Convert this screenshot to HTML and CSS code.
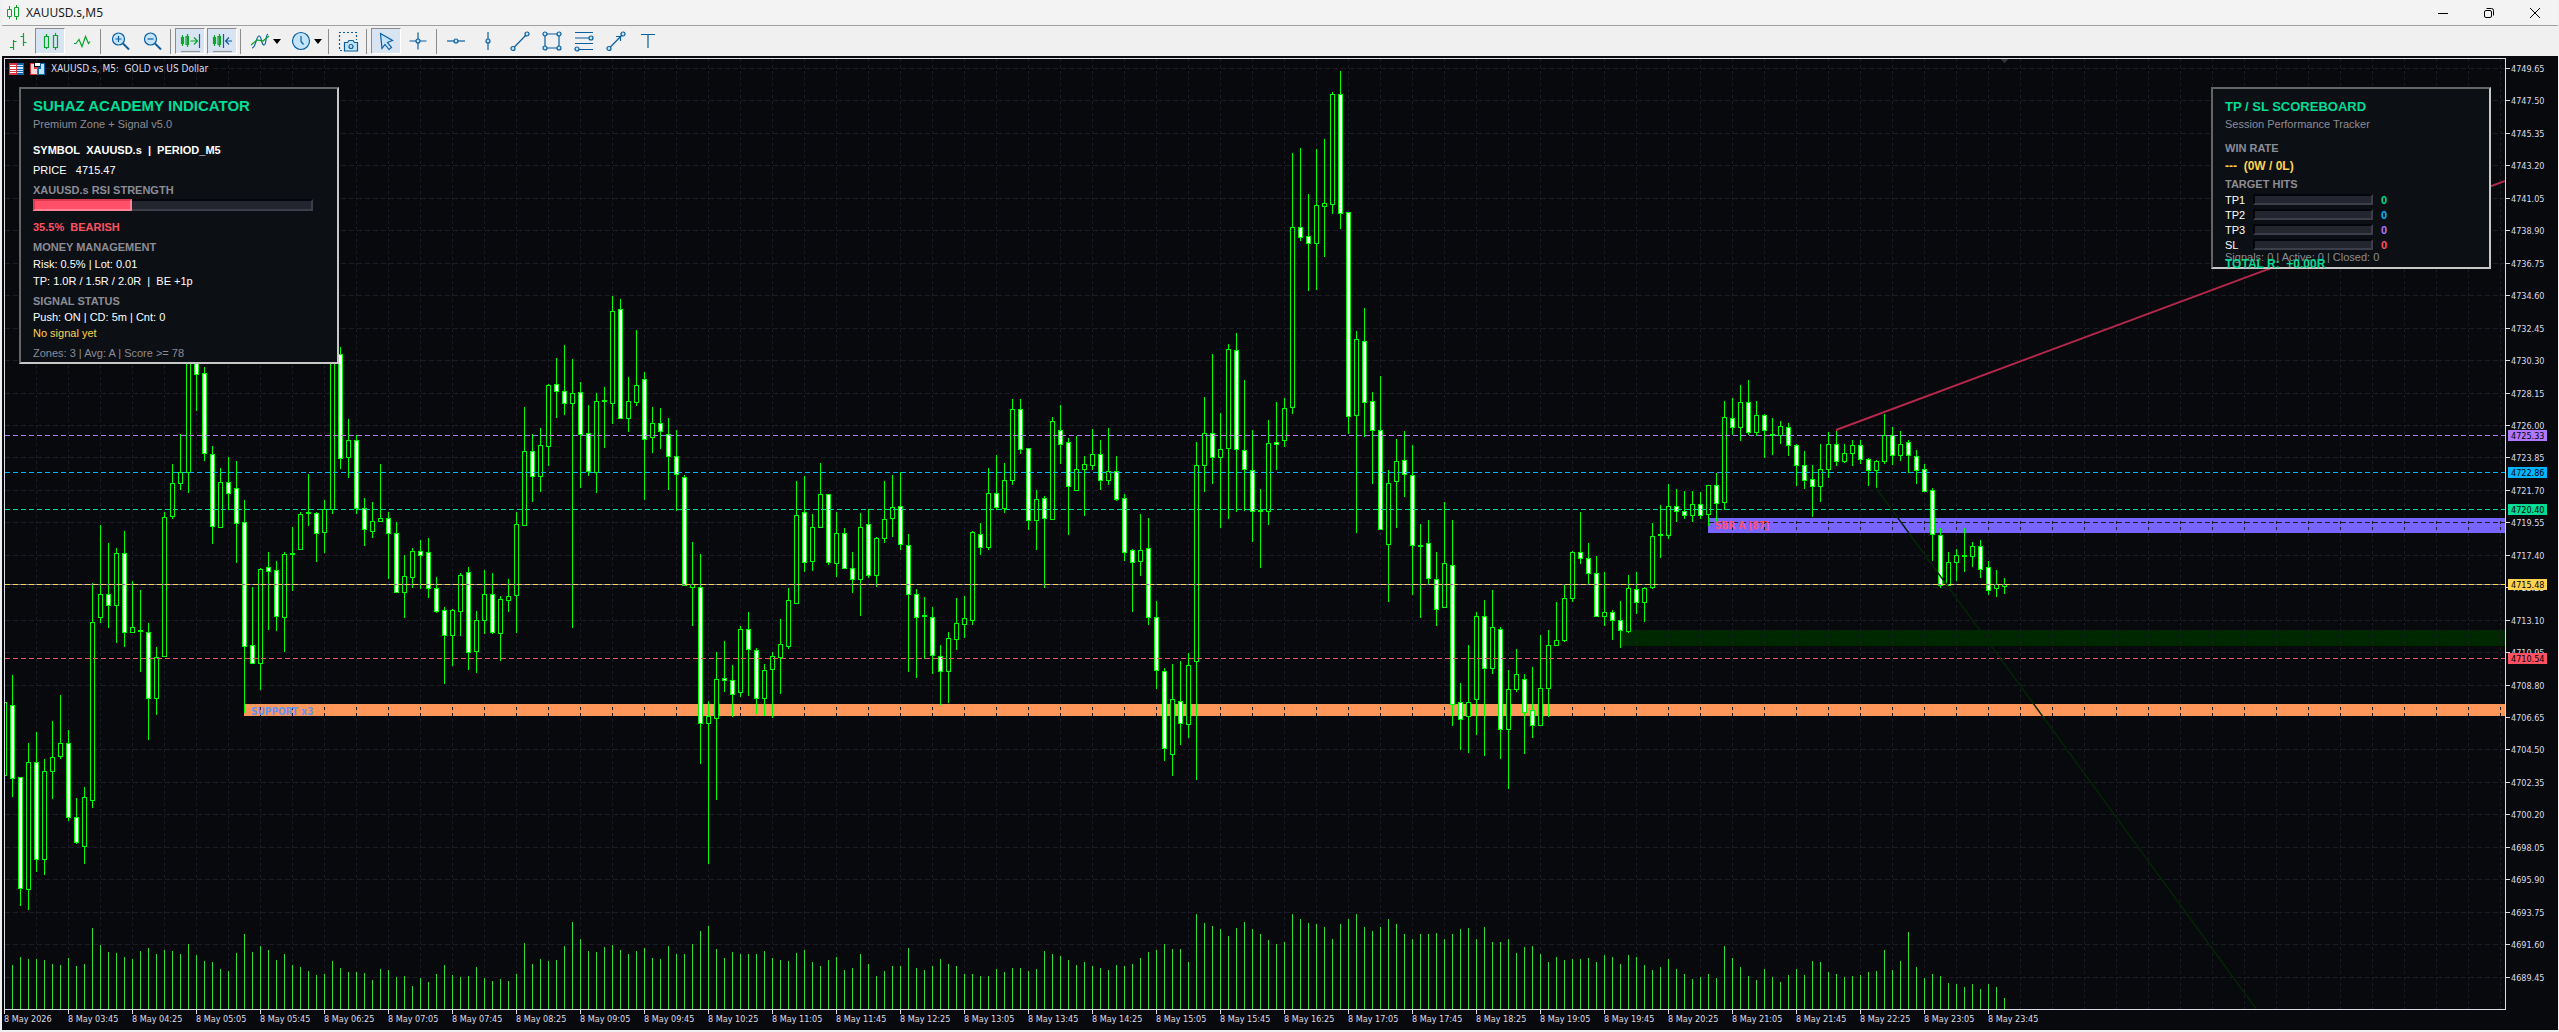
FILE: index.html
```html
<!DOCTYPE html>
<html lang="en">
<head>
  <meta charset="UTF-8">
  <meta name="viewport" content="width=device-width, initial-scale=1">
  <title>XAUUSD.s,M5</title>
  <link rel="stylesheet" href="styles.css">
</head>
<body>

  <header class="titlebar">
    <svg class="app-icon" width="14" height="16" viewBox="0 0 14 16"><path d="M3.5 1v3M3.5 12v2M1.5 4.5h4v7h-4zM10.5 0v2M10.5 12v3M8.5 2.5h4v9h-4z"/></svg>
    <h1>XAUUSD.s,M5</h1>
    <div class="window-buttons">
      <button type="button" aria-label="Minimize"><svg width="12" height="12" viewBox="0 0 12 12"><path d="M1 6.5h10"/></svg></button>
      <button type="button" aria-label="Restore"><svg width="12" height="12" viewBox="0 0 12 12"><rect x="1.500" y="3.500" width="7" height="7" rx="1.500"/><path d="M3.500 1.500h5a2 2 0 0 1 2 2v5"/></svg></button>
      <button type="button" aria-label="Close"><svg width="12" height="12" viewBox="0 0 12 12"><path d="M1 1l10 10M11 1L1 11"/></svg></button>
    </div>
  </header>

  <nav class="toolbar">
    <button type="button" class="tool green" aria-label="Bar chart"><svg viewBox="0 0 24 24"><path d="M7.500 11v10M4 18.500h3.500M7.500 12.500h3M17.500 4v13M14.500 7.500h3M17.500 13.500h3"/></svg></button>
    <button type="button" class="tool green active" aria-label="Candlesticks"><svg viewBox="0 0 24 24"><path d="M8.500 5v2.500M8.500 18.500V20M6.500 7.500h4v11h-4zM17.500 4v2.500M17.500 18.500V21M15.500 6.500h4v12h-4z"/></svg></button>
    <button type="button" class="tool green" aria-label="Line chart"><svg viewBox="0 0 24 24"><path d="M4 14.500h2l3-4 3 7 3.500-10 3 7 1.500-2"/></svg></button>
    <span class="sep"></span>
    <button type="button" class="tool" aria-label="Zoom in"><svg viewBox="0 0 24 24"><circle class="soft" cx="10.500" cy="10" r="6"/><path d="M7.500 10h6M10.500 7v6"/><path class="thick" d="M15 14.500l6 6"/></svg></button>
    <button type="button" class="tool" aria-label="Zoom out"><svg viewBox="0 0 24 24"><circle class="soft" cx="10.500" cy="10" r="6"/><path d="M7.500 10h6"/><path class="thick" d="M15 14.500l6 6"/></svg></button>
    <span class="sep"></span>
    <button type="button" class="tool active" aria-label="Auto scroll"><svg viewBox="0 0 24 24"><g class="green-line"><path d="M4.500 6v11M3.500 8.500h2v6h-2zM9.500 5v13M8 7.500h2.500v8H8zM12.500 12h7M16 8.500l3.500 3.500-3.500 3.500"/></g><path d="M21.500 5v14"/><path class="shade" d="M3 22.500h19"/></svg></button>
    <button type="button" class="tool active" aria-label="Chart shift"><svg viewBox="0 0 24 24"><g class="green-line"><path d="M4.500 6v11M3.500 8.500h2v6h-2zM9.500 5v13M8 7.500h2.500v8H8z"/></g><path d="M13.500 5v14M22 12h-6M19 8.500L15.500 12l3.500 3.500"/><path class="shade" d="M3 22.500h19"/></svg></button>
    <span class="sep"></span>
    <button type="button" class="tool wide" aria-label="Indicators"><svg viewBox="0 0 24 24"><path d="M4 19c4 0 4-12 7-12s2 9 5 9 1-10 4-11"/><path class="green-line" d="M3 16l6-5 6 1 6-5"/></svg><span class="caret"></span></button>
    <button type="button" class="tool wide" aria-label="Timeframes"><svg viewBox="0 0 24 24"><circle class="soft" cx="12" cy="12" r="8.500"/><path d="M12 7v5.500l2.500 3"/></svg><span class="caret"></span></button>
    <span class="sep"></span>
    <button type="button" class="tool" aria-label="Screenshot"><svg viewBox="0 0 24 24"><path stroke-dasharray="2 2" d="M6 21.500H3.500v-18h17V11"/><path class="soft" d="M8.500 13.500h3l1.500-2h4l1.500 2h3v8.500h-13z"/><circle cx="15" cy="17.500" r="2"/></svg></button>
    <span class="sep"></span>
    <button type="button" class="tool active" aria-label="Cursor"><svg viewBox="0 0 24 24"><path class="soft" d="M6.500 4.500l12 7-5 2 4 5-2.500 2-4-5-3 4z"/></svg></button>
    <button type="button" class="tool" aria-label="Crosshair"><svg viewBox="0 0 24 24"><path d="M12 3.500v17M3.500 12h17"/><circle class="soft" cx="12" cy="12" r="2"/></svg></button>
    <span class="sep"></span>
    <button type="button" class="tool" aria-label="Horizontal line"><svg viewBox="0 0 24 24"><path d="M3 12h18"/><circle class="soft" cx="12" cy="12" r="2"/></svg></button>
    <button type="button" class="tool" aria-label="Vertical line"><svg viewBox="0 0 24 24"><path d="M12 3v18"/><circle class="soft" cx="12" cy="12" r="2"/></svg></button>
    <button type="button" class="tool" aria-label="Trendline"><svg viewBox="0 0 24 24"><path d="M5 19.500L19 5"/><circle class="soft" cx="5" cy="19.500" r="2"/><circle class="soft" cx="19" cy="5" r="2"/></svg></button>
    <button type="button" class="tool" aria-label="Rectangle"><svg viewBox="0 0 24 24"><path d="M5 5h14v14H5z"/><circle class="soft" cx="5" cy="5" r="2"/><circle class="soft" cx="19" cy="5" r="2"/><circle class="soft" cx="5" cy="19" r="2"/><circle class="soft" cx="19" cy="19" r="2"/></svg></button>
    <button type="button" class="tool" aria-label="Fibonacci"><svg viewBox="0 0 24 24"><path d="M3 3.500h18M3 9h18M3 14.500h18M3 20.500h18"/><circle class="soft" cx="19" cy="9" r="2"/><circle class="soft" cx="5" cy="20" r="2"/></svg></button>
    <button type="button" class="tool" aria-label="Arrow"><svg viewBox="0 0 24 24"><path d="M5 19.500L19 5M12 7.500h4.500V12"/><circle class="soft" cx="5" cy="19.500" r="2"/><circle class="soft" cx="19" cy="5" r="2"/></svg></button>
    <button type="button" class="tool" aria-label="Text"><svg viewBox="0 0 24 24"><path d="M5 5.500h14M12 5.500V19"/></svg></button>
  </nav>

  <main class="chart">
    <section class="plot">
      <svg id="plot" class="canvas"></svg>

      <div class="caption">
        <svg width="15" height="12" viewBox="0 0 15 12"><path fill="#d9363e" d="M0 0h8v12H0z"/><path fill="#fff" d="M1 2h6v1H1zM1 4h6v2H1zM1 7h6v1H1zM1 9h6v1H1z"/><path fill="#0a64a8" d="M8 0h7v12H8z"/><path fill="#cfe8ff" d="M8 2h6v1H8zM8 4h6v2H8zM8 7h6v1H8zM8 9h6v1H8z"/></svg>
        <svg width="15" height="12" viewBox="0 0 15 12"><path fill="#d9363e" d="M0 0h4v4h4v8H0z"/><path fill="#ffd9d9" d="M1 1h3v5h3v5H1z"/><path fill="#0a64a8" d="M15 0h-5v4H8v8h7z"/><path fill="#bfe3ff" d="M14 1h-3v5H9v5h5z"/><path fill="#fff" d="M5 0h5v3H5z"/></svg>
        <span>XAUUSD.s, M5:&nbsp; GOLD vs US Dollar</span>
      </div>

      <aside class="panel indicator">
        <h2>SUHAZ ACADEMY INDICATOR</h2>
        <p class="muted">Premium Zone + Signal v5.0</p>
        <p class="strong gap-xl">SYMBOL&nbsp; XAUUSD.s&nbsp; |&nbsp; PERIOD_M5</p>
        <p class="gap-m">PRICE&nbsp;&nbsp; 4715.47</p>
        <p class="label gap-m">XAUUSD.s RSI STRENGTH</p>
        <div class="meter rsi"><div class="meter-fill" style="width: 35.5%"></div></div>
        <p class="strong bear gap-l">35.5%&nbsp; BEARISH</p>
        <p class="label gap-m">MONEY MANAGEMENT</p>
        <p class="gap-s">Risk: 0.5% | Lot: 0.01</p>
        <p class="gap-s">TP: 1.0R / 1.5R / 2.0R&nbsp; |&nbsp; BE +1p</p>
        <p class="label gap-m">SIGNAL STATUS</p>
        <p>Push: ON | CD: 5m | Cnt: 0</p>
        <p class="gold">No signal yet</p>
        <p class="muted gap-m">Zones: 3 | Avg: A | Score &gt;= 78</p>
      </aside>

      <aside class="panel scoreboard">
        <h2>TP / SL SCOREBOARD</h2>
        <p class="muted">Session Performance Tracker</p>
        <p class="label gap-l">WIN RATE</p>
        <p class="rate gold">---&nbsp; (0W / 0L)</p>
        <p class="label gap-s">TARGET HITS</p>
        <div class="hit"><span>TP1</span><div class="meter"></div><b class="green-text">0</b></div>
        <div class="hit"><span>TP2</span><div class="meter"></div><b class="blue-text">0</b></div>
        <div class="hit"><span>TP3</span><div class="meter"></div><b class="violet-text">0</b></div>
        <div class="hit"><span>SL</span><div class="meter"></div><b class="bear">0</b></div>
        <p class="totals muted">Signals: 0 | Active: 0 | Closed: 0</p>
        <p class="total-r">TOTAL R:&nbsp; +0.00R</p>
      </aside>
    </section>

    <svg id="prices" class="prices"></svg>
    <div id="times" class="times"></div>
  </main>

  <script src="chart.js"></script>
</body>
</html>
```

FILE: styles.css
```css
* {
  box-sizing: border-box;
}

body {
  margin: 0;
  height: 100vh;
  display: flex;
  flex-direction: column;
  padding: 0 1px 2px 2px;
  background: #f0f0f0;
  color: #fff;
  font-family: "Liberation Sans", Arial, sans-serif;
  font-size: 11px;
  overflow: hidden;
}

h1, h2, p {
  margin: 0;
}

button {
  padding: 0;
  border: none;
  background: none;
}

/* title bar */
.titlebar {
  display: flex;
  align-items: center;
  height: 26px;
  padding-left: 4px;
  background: #f3f3f3;
  border-bottom: 1px solid #a0a0a0;
}

.app-icon {
  fill: none;
  stroke: #0aa52a;
}

.titlebar h1 {
  margin-left: 6px;
  font: 12px "Noto Sans", "Open Sans", sans-serif;
  color: #1a1a1a;
}

.window-buttons {
  display: flex;
  margin-left: auto;
}

.window-buttons button {
  display: flex;
  align-items: center;
  justify-content: center;
  width: 46px;
  height: 24px;
}

.window-buttons svg {
  fill: none;
  stroke: #000;
}

/* toolbar */
.toolbar {
  display: flex;
  align-items: center;
  gap: 2px;
  height: 30px;
  padding-left: 1px;
}

.tool {
  display: flex;
  align-items: center;
  justify-content: center;
  width: 30px;
  height: 26px;
  border: 1px solid transparent;
}

.tool.active {
  background: #d8e4f2;
  border-color: #8c8c8c #fff #fff #8c8c8c;
}

.tool.wide {
  width: 39px;
}

.tool svg {
  width: 24px;
  height: 24px;
  flex: none;
  fill: none;
  stroke: #0a5fa0;
  stroke-width: 1.2;
}

.tool.green svg,
.tool svg .green-line {
  stroke: #0aa52a;
}

.tool .soft {
  fill: #c4e4fb;
}

.tool .thick {
  stroke-width: 2;
}

.tool .shade {
  stroke: #969696;
}

.caret {
  border: 4px solid transparent;
  border-top: 5px solid #000;
  border-bottom: none;
  margin-left: 1px;
}

.sep {
  width: 1px;
  height: 25px;
  margin: 0 2px 0 1px;
  background: #8c8c8c;
}

/* chart */
.chart {
  flex: 1;
  min-height: 0;
  display: grid;
  grid-template-columns: 1fr 52px;
  grid-template-rows: 1fr 20px;
  padding: 2px 0 0 2px;
  background: #08090d;
}

.plot {
  position: relative;
  min-height: 0;
  border: 1px solid #dcdce6;
}

.canvas,
.prices {
  display: block;
  width: 100%;
  height: 100%;
  min-height: 0;
  shape-rendering: crispEdges;
}

.canvas {
  position: absolute;
  inset: 0;
}

.canvas .grid {
  stroke: #1b1c26;
  fill: none;
}

.canvas .trend {
  shape-rendering: auto;
  fill: none;
}

.zone-label {
  font: bold 10px "DejaVu Sans Condensed", "DejaVu Sans", Verdana, sans-serif;
}

.prices {
  overflow: visible;
}

.prices text,
.times,
.caption {
  font-family: "DejaVu Sans Condensed", "DejaVu Sans", Tahoma, sans-serif;
  font-size: 9px;
}

.prices text {
  fill: #dcdce6;
}

.prices .tag-text {
  fill: #000;
}

.times {
  display: flex;
  color: #dcdce6;
  overflow: hidden;
}

.times span {
  position: relative;
  flex: none;
  width: 64px;
  padding-top: 4px;
  line-height: 11px;
  white-space: nowrap;
}

.times span::before {
  content: "";
  position: absolute;
  left: 0;
  top: 0;
  width: 1px;
  height: 4px;
  background: #dcdce6;
}

.caption {
  position: absolute;
  top: 4px;
  left: 4px;
  display: flex;
  align-items: center;
  gap: 6px;
  font-size: 10px;
  line-height: 12px;
  color: #dcdce6;
}

/* info panels */
.panel {
  position: absolute;
  top: 28px;
  padding: 0 12px;
  background: #0c1014;
  border: 2px solid;
  border-color: #646464 #c8c8c8 #c8c8c8 #646464;
  line-height: 16px;
  white-space: nowrap;
}

.indicator {
  left: 14px;
  width: 320px;
  padding-top: 7px;
  padding-bottom: 1px;
}

.scoreboard {
  right: 14px;
  width: 280px;
  height: 182px;
  padding-top: 9px;
}

.panel h2 {
  font-size: 15px;
  line-height: 20px;
  color: #00dc96;
}

.scoreboard h2 {
  font-size: 13px;
  line-height: 18px;
}

.muted {
  color: #8c8c96;
}

.label {
  font-weight: bold;
  color: #8c8c96;
}

.strong {
  font-weight: bold;
}

.bear {
  color: #ff5064;
}

.gold {
  color: #ffd250;
}

.green-text {
  color: #00dc96;
}

.blue-text {
  color: #00b4ff;
}

.violet-text {
  color: #b478ff;
}

.gap-s { margin-top: 1px; }
.gap-m { margin-top: 4px; }
.gap-l { margin-top: 8px; }
.gap-xl { margin-top: 10px; }

.meter {
  width: 120px;
  height: 11px;
  background: #23252f;
  border: 2px solid;
  border-color: #04050c #3c3e4a #3c3e4a #04050c;
}

.meter.rsi {
  width: 280px;
  height: 12px;
  margin-top: 1px;
  border-left: none;
  border-color: #04050c #3c3e4a #3c3e4a;
}

.meter-fill {
  height: 12px;
  margin-top: -2px;
  background: #ff5068;
  border: 2px solid;
  border-color: #dc3c50 #ff8296 #ff8296 #dc3c50;
}

.rate {
  margin-top: 1px;
  font-size: 12px;
  font-weight: bold;
  line-height: 18px;
}

.hit {
  display: flex;
  align-items: center;
  height: 15px;
}

.hit span {
  width: 28px;
}

.hit b {
  margin-left: 8px;
}

.totals {
  line-height: 11px;
}

.total-r {
  position: absolute;
  left: 12px;
  bottom: -5px;
  font-size: 12px;
  font-weight: bold;
  line-height: 16px;
  color: #00dc96;
}
```

FILE: chart.js
```js
// each bar: [up, high, body top, body bottom, low, volume top]
const bars = [
  [1,702,703,776,776,965],[0,676,706,779,797,967],[0,778,778,890,907,959],[1,744,763,891,911,961],
  [0,733,763,861,873,961],[1,760,772,861,876,962],[1,722,758,772,799,966],[1,696,744,757,759,967],
  [0,731,744,818,821,960],[0,799,818,844,845,968],[1,788,798,848,865,966],[1,584,623,801,808,930],
  [1,526,595,618,623,947],[0,544,595,606,628,954],[1,549,554,606,643,955],[0,532,554,633,647,959],
  [1,582,628,633,633,961],[1,591,631,632,672,953],[0,624,633,699,740,950],[1,648,658,699,715,956],
  [1,513,518,657,657,952],[1,465,484,517,519,953],[1,434,473,484,490,956],[1,345,350,473,493,946],
  [0,362,362,374,410,957],[0,367,373,454,461,963],[0,447,455,527,544,964],[1,469,483,528,528,971],
  [0,458,483,494,510,973],[0,462,489,524,563,955],[0,501,523,647,713,936],[0,588,646,664,664,954],
  [1,569,570,664,690,948],[0,553,568,572,630,952],[0,562,571,617,631,962],[1,553,555,618,652,956],
  [1,528,554,555,591,967],[1,513,515,550,550,969],[1,475,513,514,526,973],[0,513,514,534,562,977],
  [1,501,510,533,553,976],[1,335,340,510,514,963],[0,347,354,459,469,970],[1,419,440,458,478,974],
  [0,435,441,509,514,974],[0,499,509,530,546,975],[1,503,522,532,538,982],[1,465,519,522,522,971],
  [0,513,519,534,579,972],[0,523,534,593,593,979],[1,556,577,593,618,978],[1,549,552,578,588,988],
  [0,541,552,556,589,980],[0,539,553,589,598,984],[0,578,589,612,613,976],[0,608,611,636,684,967],
  [1,610,611,636,666,977],[1,574,576,612,636,979],[0,568,573,653,670,978],[1,612,621,652,673,969],
  [1,571,595,621,634,980],[0,574,595,633,634,983],[1,597,600,634,661,981],[1,580,597,601,612,983],
  [1,513,525,596,633,976],[1,407,452,526,526,945],[0,434,452,477,502,966],[1,428,446,477,492,961],
  [1,384,385,447,466,963],[0,358,384,391,417,962],[0,345,391,403,414,948],[1,359,393,403,628,924],
  [0,382,392,434,488,941],[0,405,433,472,476,953],[1,393,401,473,493,954],[1,387,400,401,448,949],
  [1,296,311,403,423,947],[0,299,309,418,418,952],[1,377,401,418,431,956],[1,330,385,402,405,953],
  [0,372,379,439,500,950],[1,407,423,437,453,960],[0,408,423,431,449,961],[0,418,434,457,490,948],
  [0,430,457,475,511,956],[0,476,478,586,586,956],[1,543,585,588,626,946],[0,555,588,724,764,933],
  [1,702,717,724,865,928],[1,653,680,719,800,951],[0,642,679,681,692,960],[0,666,681,695,717,954],
  [1,627,630,693,697,956],[0,613,630,650,696,956],[0,649,651,699,714,956],[1,665,671,699,716,953],
  [1,653,657,670,718,960],[1,620,645,658,694,962],[1,589,601,647,649,963],[1,482,516,604,604,955],
  [0,477,513,563,572,952],[1,515,528,562,571,964],[1,464,495,528,528,968],[0,495,495,563,565,962],
  [1,513,534,564,577,959],[0,529,534,569,569,972],[0,553,569,580,593,970],[1,514,528,580,616,956],
  [0,510,525,576,578,966],[1,538,539,576,587,978],[1,482,520,539,543,973],[1,476,508,519,537,968],
  [0,473,507,545,550,968],[0,535,546,595,672,950],[0,590,595,618,678,970],[1,598,616,617,659,972],
  [0,608,618,656,674,968],[0,646,657,672,705,961],[1,633,639,672,703,966],[1,599,624,640,650,968],
  [1,597,619,625,638,976],[1,532,533,621,625,976],[0,524,535,548,555,978],[1,469,494,548,550,978],
  [0,456,494,508,510,971],[1,464,481,509,513,974],[1,399,409,481,485,970],[0,399,409,450,454,970],
  [0,449,449,521,530,973],[1,491,500,521,550,971],[0,497,499,519,588,953],[1,417,421,520,520,956],
  [0,405,430,445,464,958],[0,438,443,487,535,962],[1,436,470,491,491,967],[1,457,465,470,516,964],
  [1,429,455,466,470,968],[0,440,455,481,490,970],[1,428,472,481,485,972],[0,457,472,500,501,967],
  [0,495,499,553,561,968],[0,550,551,563,612,966],[1,515,551,562,576,960],[0,519,549,618,625,954],
  [0,602,618,671,689,952],[0,669,672,749,761,946],[1,665,700,755,776,951],[0,662,702,724,745,951],
  [1,654,666,725,738,964],[1,443,466,662,780,916],[1,397,433,466,492,925],[0,354,433,458,484,928],
  [1,413,450,458,528,931],[1,344,349,449,519,938],[0,333,350,450,512,930],[0,380,451,470,511,924],
  [0,430,471,512,542,931],[1,490,511,512,568,936],[1,420,444,512,525,942],[0,402,443,445,470,946],
  [1,398,408,441,447,944],[1,153,227,407,413,916],[0,148,227,237,240,921],[0,194,236,243,290,925],
  [1,149,205,243,289,926],[1,139,203,206,256,929],[1,92,94,204,213,941],[0,71,94,213,228,926],
  [0,212,212,416,433,921],[1,331,339,415,533,916],[0,308,341,402,436,929],[0,392,401,430,484,933],
  [0,376,430,530,530,929],[1,471,484,545,602,921],[1,439,462,482,528,926],[0,431,461,475,497,936],
  [0,446,476,546,595,941],[1,525,546,547,618,936],[0,521,544,579,584,936],[0,553,580,610,626,935],
  [1,503,564,608,608,941],[0,521,566,705,726,936],[0,684,703,720,750,931],[1,646,703,717,753,930],
  [1,613,617,700,735,941],[0,601,617,669,756,929],[1,591,628,669,674,944],[0,628,630,730,759,944],
  [1,671,690,730,789,941],[1,650,675,690,692,955],[0,675,680,713,754,949],[0,668,711,726,738,948],
  [1,636,689,726,726,956],[1,631,646,689,717,964],[1,603,641,646,646,959],[1,585,599,641,642,962],
  [1,552,553,599,602,961],[0,513,553,559,564,961],[0,544,559,574,584,960],[0,557,574,617,617,964],
  [1,573,613,617,626,957],[0,611,613,621,640,959],[0,602,621,631,648,966],[1,576,589,632,633,957],
  [0,573,590,603,614,959],[1,588,589,603,622,967],[1,524,537,588,589,972],[1,506,535,536,558,969],
  [1,485,507,536,539,961],[0,490,507,512,522,971],[0,492,512,516,519,976],[1,492,505,516,522,981],
  [0,493,505,516,519,979],[1,486,486,515,526,976],[0,474,486,504,522,980],[1,401,417,503,510,948],
  [0,398,418,427,434,960],[1,385,402,427,440,969],[0,380,402,432,434,978],[1,401,415,432,435,982],
  [0,414,415,430,458,971],[1,418,434,435,455,979],[1,421,426,435,444,984],[0,423,427,446,456,977],
  [0,445,446,466,486,971],[0,452,466,481,489,977],[0,466,480,487,517,963],[1,445,470,487,502,964],
  [1,432,445,470,478,974],[0,431,445,462,466,976],[1,445,454,462,463,979],[1,440,446,454,466,978],
  [0,440,446,460,464,977],[0,459,460,471,486,974],[1,461,462,471,489,973],[1,414,435,462,464,952],
  [0,427,435,456,465,972],[1,431,445,456,461,963],[0,440,443,456,473,934],[0,451,457,471,484,969],
  [0,465,470,492,492,980],[0,489,491,535,561,976],[0,529,536,586,588,978],[1,553,563,586,586,985],
  [1,550,556,563,581,986],[1,529,556,557,572,989],[1,543,547,557,567,986],[0,541,547,570,578,991],
  [0,562,568,591,595,986],[1,571,585,589,597,989],[1,579,585,587,594,1000]
];

const levels = [
  { price: "4725.33", y: 435, color: "#b078ff" },
  { price: "4722.86", y: 472, color: "#00b4ff" },
  { price: "4720.40", y: 509, color: "#00dc96" },
  { price: "4710.54", y: 658, color: "#ff5064" },
  { price: "4715.48", y: 584, color: "#ffd250" }
];

const TOP = 59;
const STEP = 8;
const BASE = 950;
const priceY = k => Math.round(68 + k * 32.45);
const barY = v => Math.round(v * 0.9975 + 0.6) - TOP;
const rect = (x, y, w, h, fill) => `<rect x="${x}" y="${y}" width="${w}" height="${h}" fill="${fill}"/>`;

function drawPlot() {
  const svg = document.getElementById("plot");
  const width = svg.clientWidth;
  let out = "";

  // supply / demand zones
  out += rect(1703, 518 - TOP, width - 1703, 15, "#7864ff");
  out += rect(1617, 630 - TOP, width - 1617, 16, "#002800");
  out += rect(239, 704 - TOP, width - 239, 12, "#ff965a");

  let grid = "";
  for (let x = 31; x < width; x += 32) grid += `M${x}.5 0V${BASE}`;
  out += `<path class="grid" stroke-dasharray="3 3" d="${grid}"/>`;
  grid = "";
  for (let k = 0; k < 29; k++) {
    const y = priceY(k) - TOP;
    if (k !== 20) grid += `M0 ${y}.5H${width}`;
  }
  out += `<path class="grid" stroke-dasharray="5 3" d="${grid}"/>`;

  bars.forEach((b, i) => {
    const x = i * STEP - 1;
    const [up, high, top, bottom, low, vol] = b;
    const t = barY(top);
    const h = barY(bottom) - t + 1;
    out += rect(x, barY(vol), 1, BASE - barY(vol), "#32dc32");
    out += rect(x, barY(high), 1, barY(low) - barY(high) + 1, "#00ff00");
    out += rect(x - 2, t, 5, h, "#00ff00");
    if (h > 2) out += rect(x - 1, t + 1, 3, h - 2, up ? "#000" : "#fff");
  });

  levels.forEach(l => {
    const y = l.y - TOP + 0.5;
    if (l.price === "4715.48") out += `<path stroke="#787c8c" d="M0 ${y}H${width}"/>`;
    out += `<path stroke="${l.color}" stroke-dasharray="5 3" d="M0 ${y}H${width}"/>`;
  });

  // trend lines
  out += `<path class="trend" stroke="#b4284b" stroke-width="2" d="M1831 371L2500 122"/>`;
  out += `<path class="trend" stroke="#032503" stroke-width="1.5" d="M1871 429L2252 951"/>`;

  out += `<text class="zone-label" x="246" y="656" fill="#6495ed">SUPPORT x3</text>`;
  out += `<text class="zone-label" x="1710" y="470" fill="#ff5078">SBR A [87]</text>`;
  out += `<path fill="#32343e" d="M1996 0h7l-3.500 4z"/>`;
  svg.innerHTML = out;
}

function drawPrices() {
  let out = "";
  for (let k = 0; k < 29; k++) {
    const y = priceY(k) - TOP + 1;
    out += rect(0, y, 4, 1, "#dcdce6");
    out += `<text x="5" y="${y + 4}">${(4749.65 - k * 2.15).toFixed(2)}</text>`;
  }
  levels.forEach(l => {
    const y = l.y - TOP + 1;
    out += rect(2, y - 5, 39, 11, l.color);
    out += `<text class="tag-text" x="5" y="${y + 4}">${l.price}</text>`;
  });
  document.getElementById("prices").innerHTML = out;
}

function drawTimes() {
  let out = "<span>8 May 2026</span>";
  for (let m = 225; m <= 1425; m += 40) {
    const hh = String(Math.floor(m / 60)).padStart(2, "0");
    const mm = String(m % 60).padStart(2, "0");
    out += `<span>8 May ${hh}:${mm}</span>`;
  }
  document.getElementById("times").innerHTML = out;
}

drawPlot();
drawPrices();
drawTimes();
window.addEventListener("resize", drawPlot);
```
